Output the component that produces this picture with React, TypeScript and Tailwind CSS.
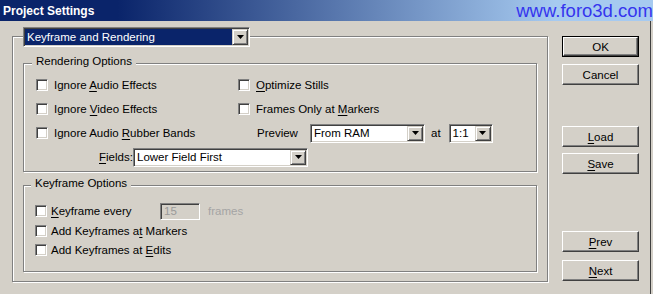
import React from "react";

const sunken =
  "border border-t-[#808080] border-l-[#808080] border-b-white border-r-white shadow-[inset_1px_1px_#404040,inset_-1px_-1px_#d4d0c8]";
const raised =
  "border border-t-white border-l-white border-b-[#404040] border-r-[#404040] shadow-[inset_-1px_-1px_#808080]";
const etched =
  "border border-[#808080] shadow-[1px_1px_0_#fff,inset_1px_1px_0_#fff]";

const U = ({ children }: { children: React.ReactNode }) => (
  <span className="underline underline-offset-[2px]">{children}</span>
);

const Arrow = () => (
  <svg width="7" height="4" viewBox="0 0 7 4">
    <path d="M0 0h7L3.5 4z" fill="#000" />
  </svg>
);

const DropButton = () => (
  <span className="flex h-full w-[16px] shrink-0 items-center justify-center bg-[#d4d0c8] border border-t-[#d4d0c8] border-l-[#d4d0c8] border-b-[#404040] border-r-[#404040] shadow-[inset_1px_1px_#fff,inset_-1px_-1px_#808080]">
    <Arrow />
  </span>
);

const Select = ({
  text,
  className,
  selected = false,
}: {
  text: string;
  className: string;
  selected?: boolean;
}) => (
  <div className={`flex shrink-0 p-[1px] bg-white ${sunken} ${className}`}>
    <span
      className={`flex flex-1 items-center overflow-hidden whitespace-nowrap pl-[2px] ${
        selected ? "bg-[#0a246a] text-white" : "bg-white"
      }`}
    >
      {text}
    </span>
    <DropButton />
  </div>
);

const Check = ({ gap, children }: { gap: string; children: React.ReactNode }) => (
  <div className="flex items-center">
    <span className={`h-[12px] w-[12px] shrink-0 bg-white ${sunken}`} />
    <span className={`${gap} whitespace-nowrap`}>{children}</span>
  </div>
);

const Button = ({ label, className = "", isDefault = false }: { label: React.ReactNode; className?: string; isDefault?: boolean }) =>
  isDefault ? (
    <div className={`h-[21px] w-[77px] border border-black ${className}`}>
      <div className={`flex h-full items-center justify-center ${raised}`}>{label}</div>
    </div>
  ) : (
    <div className={`flex h-[21px] w-[77px] items-center justify-center ${raised} ${className}`}>
      {label}
    </div>
  );

export default function App() {
  return (
    <div className="flex h-[294px] w-[653px] flex-col overflow-hidden bg-[#d4d0c8] font-['Liberation_Sans',Arial,sans-serif] text-[11.5px] leading-[14px] text-black">
      {/* title bar */}
      <div className="flex h-[21px] shrink-0 items-center justify-between bg-[linear-gradient(to_right,#0a246a_18%,#a6caf0_85%)]">
        <span className="pl-[3px] text-[12px] font-bold text-white">Project Settings</span>
        <span className="text-[18.5px] leading-[21px] text-[#3535ee]">www.foro3d.com</span>
      </div>

      <div className="flex w-[651px] flex-1 border-r border-[#404040]">
        {/* main panel */}
        <div className="pl-[12px] pt-[15px]">
          <div className={`flex h-[246px] w-[536px] flex-col ${etched}`}>
            <Select
              text="Keyframe and Rendering"
              selected
              className="-mt-[10px] ml-[10px] h-[20px] w-[227px]"
            />

            {/* Rendering Options */}
            <div className={`mx-[10px] mt-[16px] flex h-[109px] flex-col ${etched}`}>
              <span className="-mt-[10px] ml-[8px] w-fit bg-[#d4d0c8] px-[4px]">Rendering Options</span>
              <div className="mt-[5px] flex h-[24px] items-center">
                <div className="w-[214px] pl-[12px]">
                  <Check gap="ml-[6px]">
                    Ignore <U>A</U>udio Effects
                  </Check>
                </div>
                <Check gap="ml-[6px]">
                  <U>O</U>ptimize Stills
                </Check>
              </div>
              <div className="flex h-[24px] items-center">
                <div className="w-[214px] pl-[12px]">
                  <Check gap="ml-[6px]">
                    Ignore <U>V</U>ideo Effects
                  </Check>
                </div>
                <Check gap="ml-[6px]">
                  Frames Only at <U>M</U>arkers
                </Check>
              </div>
              <div className="flex h-[24px] items-center">
                <div className="w-[214px] pl-[12px]">
                  <Check gap="ml-[6px]">
                    Ignore Audio <U>R</U>ubber Bands
                  </Check>
                </div>
                <span className="ml-[19px] w-[53px]">Preview</span>
                <Select text="From RAM" className="h-[19px] w-[115px]" />
                <span className="ml-[6px]">at</span>
                <Select text="1:1" className="ml-[8px] h-[19px] w-[44px]" />
              </div>
              <div className="flex h-[24px] items-center pl-[75px]">
                <span className="w-[34px]">
                  <U>F</U>ields:
                </span>
                <Select text="Lower Field First" className="h-[19px] w-[175px]" />
              </div>
            </div>

            {/* Keyframe Options */}
            <div className={`mx-[10px] mt-[13px] flex h-[87px] flex-col ${etched}`}>
              <span className="-mt-[10px] ml-[7px] w-fit bg-[#d4d0c8] px-[4px]">Keyframe Options</span>
              <div className="mt-[11px] flex h-[20px] items-center pl-[11px]">
                <div className="w-[125px]">
                  <Check gap="ml-[4px]">
                    <U>K</U>eyframe every
                  </Check>
                </div>
                <div className={`flex h-[17px] w-[40px] items-center p-[1px] pl-[3px] text-[#9a9a9a] ${sunken} bg-[#d4d0c8]`}>
                  15
                </div>
                <span className="ml-[8px] text-[#a4a4a4]">frames</span>
              </div>
              <div className="flex h-[19px] items-center pl-[11px]">
                <Check gap="ml-[4px]">
                  Add Keyframes a<U>t</U> Markers
                </Check>
              </div>
              <div className="flex h-[19px] items-center pl-[11px]">
                <Check gap="ml-[4px]">
                  Add Keyframes at <U>E</U>dits
                </Check>
              </div>
            </div>
          </div>
        </div>

        {/* buttons */}
        <div className="ml-[14px] flex flex-col pt-[15px]">
          <Button label="OK" isDefault />
          <Button label="Cancel" className="mt-[7px]" />
          <Button label={<><U>L</U>oad</>} className="mt-[41px]" />
          <Button label={<><U>S</U>ave</>} className="mt-[6px]" />
          <Button label={<><U>P</U>rev</>} className="mt-[57px]" />
          <Button label={<><U>N</U>ext</>} className="mt-[8px]" />
        </div>
      </div>
    </div>
  );
}
